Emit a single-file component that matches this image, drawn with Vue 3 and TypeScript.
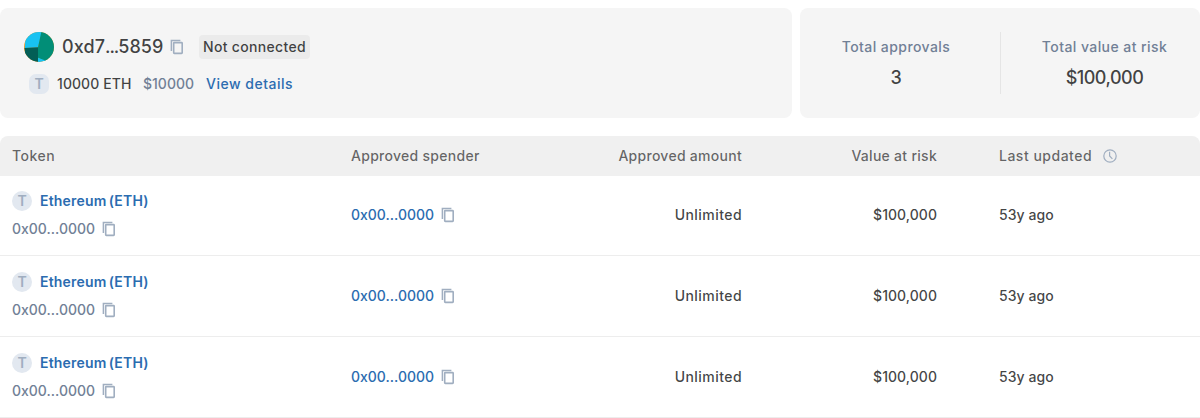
<script setup lang="ts">
import { defineComponent, h } from 'vue'

interface Approval {
  id: number
  token: string
  address: string
  spender: string
  amount: string
  value: string
  updated: string
}

const approvals: Approval[] = [1, 2, 3].map((id) => ({
  id,
  token: 'Ethereum (ETH)',
  address: '0x00...0000',
  spender: '0x00...0000',
  amount: 'Unlimited',
  value: '$100,000',
  updated: '53y ago',
}))

const CopyIcon = defineComponent({
  render: () =>
    h('svg', { width: 20, height: 20, viewBox: '0 0 20 20', fill: 'none' }, [
      h('path', { d: 'M4.4 14V3.5h9', stroke: '#a0aec0', 'stroke-width': 1.5 }),
      h('rect', { x: 6.7, y: 5.6, width: 8.5, height: 10.8, rx: 0.6, stroke: '#a0aec0', 'stroke-width': 1.6 }),
    ]),
})
</script>

<template>
  <main class="page">
    <section class="summary">
      <div class="card wallet">
        <div class="line account">
          <svg class="avatar" width="30" height="30" viewBox="0 0 30 30">
            <defs>
              <clipPath id="avatar-clip"><circle cx="15" cy="15" r="15" /></clipPath>
            </defs>
            <g clip-path="url(#avatar-clip)">
              <rect width="30" height="30" fill="#f59a23" />
              <path d="M1.8 0H18L14 15.5L0.8 16Z" fill="#18c2f2" />
              <path d="M0.4 15.9L14 15.2V30H2Z" fill="#035e56" />
              <path d="M17.3 0H30V30H22L14 25.8V15.2Z" fill="#018e77" />
              <path d="M14 25.8L22 28.8L18 30H14Z" fill="#18c2f2" />
            </g>
          </svg>
          <span class="hash">0xd7<span class="dots">...</span>5859</span>
          <CopyIcon class="copy" />
          <span class="status">Not connected</span>
        </div>
        <div class="line balance">
          <span class="token-mark square">T</span>
          <span class="eth">10000 ETH</span>
          <span class="usd">$10000</span>
          <a class="link details">View details</a>
        </div>
      </div>
      <div class="card totals">
        <div class="total">
          <span class="label">Total approvals</span>
          <span class="figure">3</span>
        </div>
        <div class="total">
          <span class="label">Total value at risk</span>
          <span class="figure">$100,000</span>
        </div>
      </div>
    </section>

    <section class="table">
      <div class="row head">
        <span class="wide">Token</span>
        <span>Approved spender</span>
        <span class="num">Approved amount</span>
        <span class="num">Value at risk</span>
        <span class="updated wide">
          Last updated
          <svg class="clock" width="14" height="14" viewBox="0 0 14 14" fill="none" stroke="#a0aec0">
            <circle cx="7" cy="7" r="6.2" stroke-width="1.2" />
            <path d="M6.6 2.8V7L9.4 9.9" stroke-width="1.2" />
          </svg>
        </span>
      </div>
      <div v-for="item in approvals" :key="item.id" class="row body">
        <div class="token">
          <div class="token-name"><span class="token-mark">T</span><a class="link name">{{ item.token }}</a></div>
          <div class="token-address"><span>{{ item.address }}</span><CopyIcon class="copy" /></div>
        </div>
        <div class="spender"><a class="link">{{ item.spender }}</a><CopyIcon class="copy" /></div>
        <span class="num amount">{{ item.amount }}</span>
        <span class="num value">{{ item.value }}</span>
        <span class="age">{{ item.updated }}</span>
      </div>
    </section>
  </main>
</template>

<style>
body {
  background: #fff;
}
</style>

<style scoped>
.page {
  box-sizing: border-box;
  width: 1200px;
  height: 418px;
  padding-top: 8px;
  overflow: hidden;
  font: 500 14px/20px Inter, sans-serif;
  color: rgba(16, 17, 18, 0.8);
  white-space: nowrap;
}
.summary {
  display: grid;
  grid-template-columns: 792px 400px;
  gap: 8px;
}
.card {
  box-sizing: border-box;
  height: 110px;
  border-radius: 8px;
  background: #f5f5f5;
}
.wallet {
  padding: 24px;
}
.line {
  display: flex;
  align-items: center;
}
.account {
  height: 30px;
}
.hash {
  width: 101px;
  margin-left: 8px;
  font-size: 18px;
  letter-spacing: 0.1px;
}
.dots {
  letter-spacing: -1.1px;
}
.copy {
  display: block;
  flex: none;
}
.account .copy {
  margin-left: 4px;
}
.status {
  box-sizing: border-box;
  width: 111px;
  margin-left: 12px;
  padding: 2px 4px;
  border-radius: 4px;
  background: #ebebeb;
  letter-spacing: 0.33px;
}
.balance {
  height: 20px;
  margin-top: 12px;
  padding-left: 5px;
}
.token-mark {
  flex: none;
  width: 20px;
  height: 20px;
  border-radius: 50%;
  background: #e2e8f0;
  color: #a0aec0;
  font-weight: 600;
  text-align: center;
}
.token-mark.square {
  border-radius: 7px;
}
.eth {
  width: 74px;
  margin-left: 8px;
  letter-spacing: 0.08px;
}
.usd {
  margin: 0 12px;
  color: #718096;
}
.link {
  color: #2b6cb0;
}
.details {
  letter-spacing: 0.5px;
}
.totals {
  display: grid;
  grid-template-columns: 200px 200px;
  padding: 24px 0;
}
.total {
  display: flex;
  flex-direction: column;
  align-items: center;
  box-sizing: border-box;
  height: 62px;
  padding: 5px 8px 0 0;
}
.total + .total {
  padding: 5px 0 0 8px;
  border-left: 1px solid #e5e5e5;
}
.label {
  color: #718096;
  letter-spacing: 0.43px;
}
.figure {
  margin-top: 9px;
  font-size: 18px;
  line-height: 24px;
  letter-spacing: -0.5px;
}
.table {
  margin-top: 18px;
}
.row {
  display: grid;
  grid-template-columns: 339px 212px 179px 195px 1fr;
  align-items: center;
  box-sizing: border-box;
  padding-left: 12px;
}
.head {
  height: 40px;
  border-radius: 8px 8px 0 0;
  background: #f0f0f0;
  color: rgba(16, 17, 18, 0.64);
  letter-spacing: 0.28px;
}
.wide {
  letter-spacing: 0.5px;
}
.body {
  height: 81px;
  border-bottom: 1px solid #ededed;
}
.head + .body {
  height: 80px;
  padding-bottom: 1px;
}
.num {
  text-align: right;
}
.num + :not(.num) {
  padding-left: 62px;
}
.amount {
  letter-spacing: 0.45px;
}
.value,
.age {
  letter-spacing: 0.05px;
}
.updated {
  display: flex;
  align-items: center;
  gap: 11px;
}
.token-name,
.token-address,
.spender {
  display: flex;
  align-items: center;
}
.token-name {
  gap: 8px;
}
.name {
  font-weight: 600;
  letter-spacing: 0.2px;
  word-spacing: -1.6px;
}
.token-address {
  margin-top: 8px;
  color: #718096;
}
.token-address .copy,
.spender .copy {
  margin-left: 4px;
}
</style>
